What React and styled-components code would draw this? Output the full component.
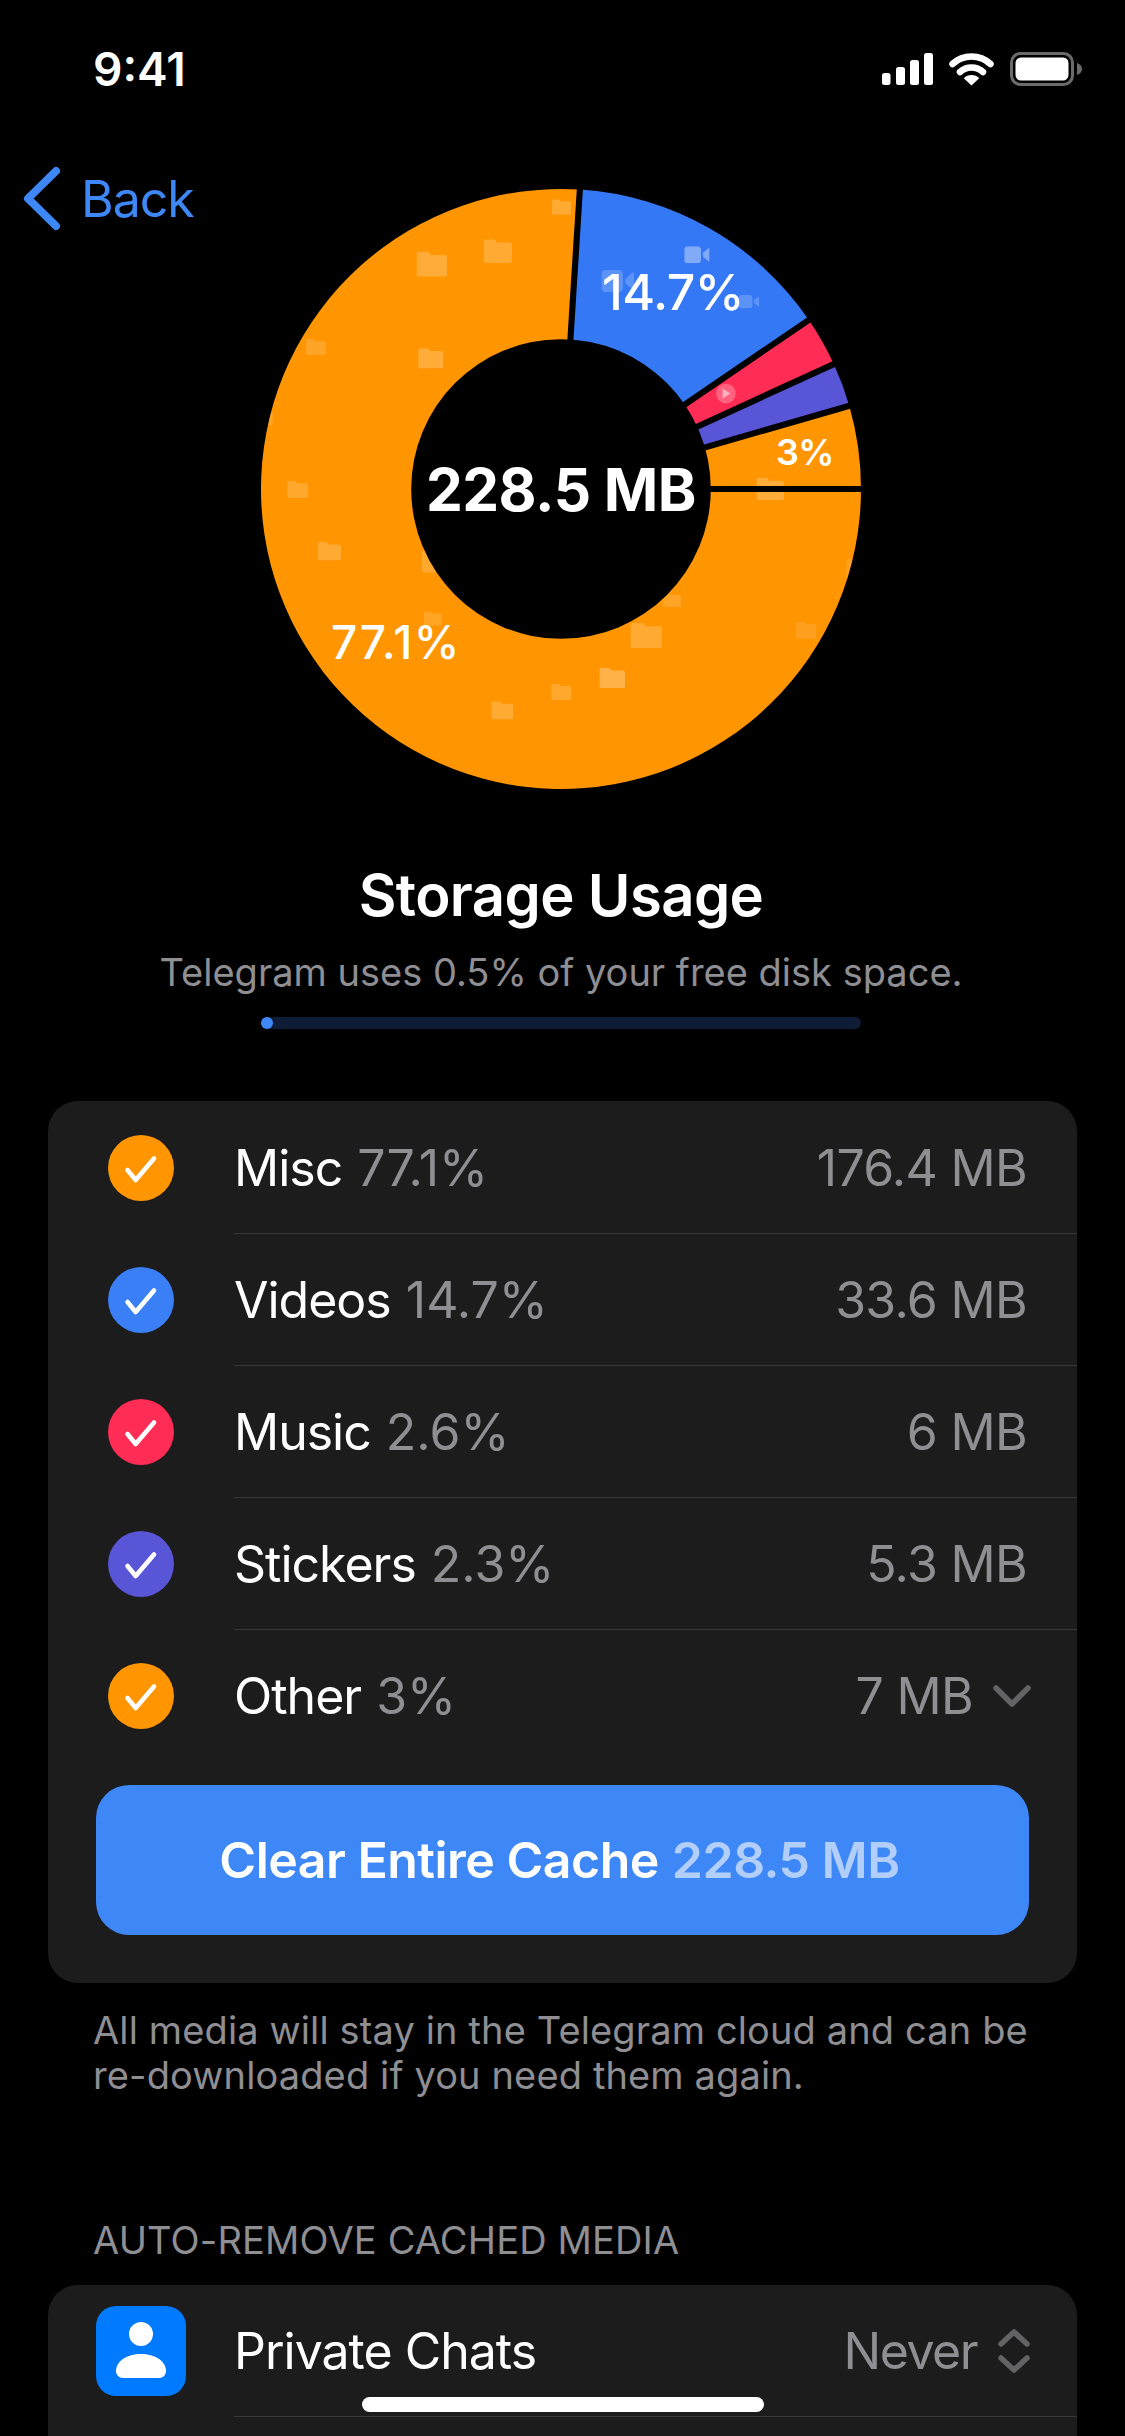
import styled, { createGlobalStyle } from "styled-components";

const GlobalStyle = createGlobalStyle`
    html, body {
        margin: 0;
        padding: 0;
        background: #000000;
    }
`

const CX = 786, CY = 780, OUTER = 735, INNER = 367;

const point = (r, deg) => {
    const a = (deg * Math.PI) / 180;
    return `${CX + r * Math.cos(a)} ${CY - r * Math.sin(a)}`;
};

const wedge = (from, to) =>
    `M${CX} ${CY} L${point(OUTER, from)} A${OUTER} ${OUTER} 0 ${to - from > 180 ? 1 : 0} 0 ${point(OUTER, to)} Z`;

const slices = [
    { from: 86.4, to: 360, color: "#FF9500" },
    { from: 34.3, to: 86.4, color: "#3478F6" },
    { from: 24.6, to: 34.3, color: "#FF2D55" },
    { from: 16.1, to: 24.6, color: "#5856D6" },
    { from: 0, to: 16.1, color: "#FF9500" },
];

const folders = [
    [763, 70, 48, 38, .2], [596, 168, 70, 58, .2], [432, 198, 75, 62, .22], [160, 412, 50, 40, .15],
    [436, 435, 62, 50, .22], [115, 760, 52, 42, .18], [190, 910, 58, 45, .2], [445, 930, 62, 55, .18],
    [450, 1080, 45, 35, .14], [1035, 1035, 45, 35, .14], [956, 1108, 78, 62, .2], [1362, 1105, 50, 42, .12],
    [880, 1218, 63, 50, .28], [762, 1257, 50, 40, .18], [615, 1300, 54, 45, .2], [1265, 752, 68, 55, .22],
    [1485, 950, 50, 50, .12], [30, 585, 50, 40, .14],
];

const videos = [[1088, 185, 62, 42, .38], [885, 243, 80, 55, .2], [1222, 305, 50, 32, .2]];

const legend = [
    { name: "Misc", share: "77.1%", size: "176.4 MB", color: "#FF9500" },
    { name: "Videos", share: "14.7%", size: "33.6 MB", color: "#3A7FF6" },
    { name: "Music", share: "2.6%", size: "6 MB", color: "#FF2D55" },
    { name: "Stickers", share: "2.3%", size: "5.3 MB", color: "#5856D6" },
    { name: "Other", share: "3%", size: "7 MB", color: "#FF9500", more: true },
];

function Folder({ x, y, w, h, o }) {
    return (
        <svg x={x} y={y} width={w} height={h} viewBox="0 0 100 80" preserveAspectRatio="none">
            <path d="M8 0h26c4 0 7 2 9 5l4 6h45c4 0 8 4 8 8v53c0 4-4 8-8 8H8c-4 0-8-4-8-8V8c0-4 4-8 8-8z" fill="#fff" fillOpacity={o} />
        </svg>
    );
}

function Video({ x, y, w, h, o }) {
    return (
        <svg x={x} y={y} width={w} height={h} viewBox="0 0 100 68" preserveAspectRatio="none">
            <rect width="66" height="68" rx="14" fill="#fff" fillOpacity={o} />
            <path d="M74 26 96 8c2-1 4 0 4 2v48c0 2-2 3-4 2L74 42z" fill="#fff" fillOpacity={o} />
        </svg>
    );
}

function Donut() {
    return (
        <svg width="640" height="640" viewBox="2 -4 1568 1568">
            <defs>
                <clipPath id="ring">
                    <circle cx={CX} cy={CY} r={OUTER} />
                </clipPath>
            </defs>
            {slices.map(s => <path key={s.from} d={wedge(s.from, s.to)} fill={s.color} />)}
            <g clipPath="url(#ring)">
                {folders.map(([x, y, w, h, o]) => <Folder key={`${x}-${y}`} x={x} y={y} w={w} h={h} o={o} />)}
                {videos.map(([x, y, w, h, o]) => <Video key={x} x={x} y={y} w={w} h={h} o={o} />)}
                <circle cx="1190" cy="546" r="24" fill="#fff" fillOpacity=".25" />
                <path d="M1182 534l19 12-19 12z" fill="#fff" fillOpacity=".5" />
            </g>
            {[0, 16.1, 24.6, 34.3, 86.4].map(deg => (
                <line key={deg} x1={CX} y1={CY} x2={CX + 760 * Math.cos(deg * Math.PI / 180)} y2={CY - 760 * Math.sin(deg * Math.PI / 180)} stroke="#000" strokeWidth="15" />
            ))}
            <circle cx={CX} cy={CY} r={INNER} fill="#000" />
        </svg>
    );
}

export default function App() {
    return (
        <Screen>
            <GlobalStyle />
            <StatusBar>
                <Time>9:41</Time>
                <StatusIcons>
                    <svg width="51" height="33" viewBox="0 0 51 33">
                        <rect x="0" y="20" width="8.5" height="12" rx="2.5" fill="#fff" />
                        <rect x="14" y="14" width="9" height="18" rx="2.5" fill="#fff" />
                        <rect x="28" y="7" width="9" height="25" rx="2.5" fill="#fff" />
                        <rect x="42" y="0" width="9" height="32" rx="2.5" fill="#fff" />
                    </svg>
                    <svg width="45" height="33" viewBox="0 0 45 33">
                        <path d="M3.5 11A28 28 0 0 1 41.5 11" fill="none" stroke="#fff" strokeWidth="6.5" strokeLinecap="round" />
                        <path d="M11 19A17 17 0 0 1 34 19" fill="none" stroke="#fff" strokeWidth="6.5" strokeLinecap="round" />
                        <path d="M22.5 32.5 14.8 25.2A11 11 0 0 1 30.2 25.2Z" fill="#fff" />
                    </svg>
                    <svg width="72" height="34" viewBox="0 0 72 34">
                        <rect x="1.5" y="1.5" width="61" height="31" rx="9" fill="none" stroke="#6b6b6b" strokeWidth="3" />
                        <rect x="5.5" y="5.5" width="53" height="23" rx="5.5" fill="#fff" />
                        <path d="M67 11c3 1 5 3 5 6s-2 5-5 6z" fill="#6b6b6b" />
                    </svg>
                </StatusIcons>
            </StatusBar>

            <BackLink>
                <svg width="38" height="63" viewBox="0 0 38 63">
                    <path d="M33 4 5 31.5 33 59" fill="none" stroke="#3E87F7" strokeWidth="8" strokeLinecap="round" strokeLinejoin="round" />
                </svg>
                <span>Back</span>
            </BackLink>

            <Hero>
                <Chart>
                    <Donut />
                    <ChartLabel $x={320} $y={320} $size={58.5} $weight={700}>228.5 MB</ChartLabel>
                    <ChartLabel $x={432} $y={123} $size={50} $weight={500}>14.7%</ChartLabel>
                    <ChartLabel $x={564} $y={283} $size={36} $weight={600}>3%</ChartLabel>
                    <ChartLabel $x={155} $y={473} $size={46} $weight={500} $spacing={1.5}>77.1%</ChartLabel>
                </Chart>
                <Title>Storage Usage</Title>
                <Subtitle>Telegram uses 0.5% of your free disk space.</Subtitle>
                <Track>
                    <TrackFill />
                </Track>
            </Hero>

            <Card>
                {legend.map((item, index) => (
                    <Row key={item.name}>
                        <Lead>
                            <CheckMark $color={item.color}>
                                <svg width="66" height="66" viewBox="0 0 66 66">
                                    <path d="M19.5 35 27.7 45 46 23.5" fill="none" stroke="#fff" strokeWidth="4.6" strokeLinecap="round" strokeLinejoin="round" />
                                </svg>
                            </CheckMark>
                        </Lead>
                        <RowBody $last={index === legend.length - 1}>
                            <Label>
                                {item.name} <Share>{item.share}</Share>
                            </Label>
                            <Value>
                                {item.size}
                                {item.more && (
                                    <MoreChevron width="38" height="24" viewBox="0 0 38 24">
                                        <path d="M3 4 19 20 35 4" fill="none" stroke="#636366" strokeWidth="5.5" strokeLinecap="round" strokeLinejoin="round" />
                                    </MoreChevron>
                                )}
                            </Value>
                        </RowBody>
                    </Row>
                ))}
                <ClearButton>
                    Clear Entire Cache <ClearSize>228.5 MB</ClearSize>
                </ClearButton>
            </Card>

            <Footnote>
                All media will stay in the Telegram cloud and can be<br />
                re-downloaded if you need them again.
            </Footnote>

            <SectionTitle>Auto-Remove Cached Media</SectionTitle>

            <SettingsCard>
                <Row>
                    <Lead>
                        <IconTile>
                            <svg width="90" height="90" viewBox="0 0 90 90">
                                <circle cx="45" cy="28" r="12" fill="#fff" />
                                <path d="M45 48c14 0 25 7 25 17 0 4-3 7-7 7H27c-4 0-7-3-7-7 0-10 11-17 25-17z" fill="#fff" />
                            </svg>
                        </IconTile>
                    </Lead>
                    <RowBody $tight>
                        <Label>Private Chats</Label>
                        <Value>
                            <Setting>Never</Setting>
                            <svg width="34" height="44" viewBox="0 0 34 44">
                                <path d="M4 15 17 3 30 15M4 29 17 41 30 29" fill="none" stroke="#636366" strokeWidth="5.5" strokeLinecap="round" strokeLinejoin="round" />
                            </svg>
                        </Value>
                    </RowBody>
                </Row>
            </SettingsCard>

            <HomeBar />
        </Screen>
    );
}

const Screen = styled.div`
    position: relative;
    width: 1125px;
    height: 2436px;
    overflow: hidden;
    background: #000000;
    color: #FFFFFF;
    font-family: "Inter", "Liberation Sans", sans-serif;
`
const StatusBar = styled.div`
    height: 132px;
    box-sizing: border-box;
    padding: 46px 43px 0 93px;
    display: flex;
    justify-content: space-between;
    align-items: flex-start;
`
const Time = styled.div`
    font-size: 46px;
    font-weight: 600;
    line-height: 46px;
`
const StatusIcons = styled.div`
    margin-top: 6px;
    display: flex;
    align-items: center;
    gap: 16px;
`
const BackLink = styled.div`
    position: absolute;
    top: 167px;
    left: 23px;
    display: flex;
    align-items: center;
    gap: 20px;
    color: #3E87F7;
    font-size: 50px;
    letter-spacing: -1px;
`
const Hero = styled.div`
    width: 1122px;
    display: flex;
    flex-direction: column;
    align-items: center;
`
const Chart = styled.div`
    position: relative;
    width: 640px;
    height: 640px;
    margin-top: 37px;

    svg {
        display: block;
    }
`
const ChartLabel = styled.span`
    position: absolute;
    left: ${props => props.$x}px;
    top: ${props => props.$y}px;
    transform: translate(-50%, -50%);
    font-size: ${props => props.$size}px;
    font-weight: ${props => props.$weight};
    letter-spacing: ${props => props.$spacing ?? -0.5}px;
    white-space: nowrap;
`
const Title = styled.div`
    margin-top: 50px;
    font-size: 58px;
    font-weight: 600;
    line-height: 72px;
    letter-spacing: -0.6px;
`
const Subtitle = styled.div`
    margin-top: 17px;
    font-size: 38px;
    line-height: 48px;
    color: #8E8E93;
`
const Track = styled.div`
    width: 600px;
    height: 12px;
    margin-top: 21px;
    border-radius: 6px;
    background: #0E1C36;
`
const TrackFill = styled.div`
    width: 12px;
    height: 12px;
    border-radius: 6px;
    background: #3E87F7;
`
const Card = styled.div`
    margin: 72px 48px 0;
    padding: 1px 0 48px;
    border-radius: 30px;
    background: #1C1C1C;
`
const Row = styled.div`
    height: 132px;
    display: flex;
`
const Lead = styled.div`
    flex: 0 0 186px;
    box-sizing: border-box;
    padding-left: 48px;
    display: flex;
    align-items: center;
`
const CheckMark = styled.div`
    width: 66px;
    height: 66px;
    margin-left: 12px;
    border-radius: 50%;
    background: ${props => props.$color};
`
const RowBody = styled.div`
    flex: 1;
    box-sizing: border-box;
    padding-right: ${props => props.$tight ? "46px" : "50px"};
    display: flex;
    justify-content: space-between;
    align-items: center;
    border-bottom: ${props => props.$last ? "none" : "1.5px solid #38383A"};
    font-size: 50px;
`
const Label = styled.div`
    letter-spacing: -1px;
`
const Share = styled.span`
    margin-left: 2px;
    color: #8E8E93;
    letter-spacing: 0;
`
const Value = styled.div`
    display: flex;
    align-items: center;
    gap: 20px;
    color: #8E8E93;
    letter-spacing: -0.7px;
`
const Setting = styled.span`
    letter-spacing: -1.5px;
`
const MoreChevron = styled.svg`
    margin-right: -4px;
`
const ClearButton = styled.div`
    height: 150px;
    box-sizing: border-box;
    margin: 23px 48px 0;
    padding-right: 6px;
    border-radius: 33px;
    display: flex;
    justify-content: center;
    align-items: center;
    gap: 13px;
    background: #3E87F7;
    font-size: 50px;
    font-weight: 600;
    letter-spacing: -0.5px;
`
const ClearSize = styled.span`
    color: #B2CFFB;
`
const Footnote = styled.div`
    margin: 25px 93px 0;
    font-size: 38px;
    line-height: 45px;
    letter-spacing: 0.13px;
    color: #8E8E93;
    white-space: nowrap;
`
const SectionTitle = styled.div`
    margin: 120px 93px 0;
    font-size: 38px;
    line-height: 45px;
    letter-spacing: 0.15px;
    color: #8E8E93;
    text-transform: uppercase;
`
const SettingsCard = styled.div`
    margin: 22px 48px 0;
    min-height: 300px;
    border-radius: 30px;
    background: #1C1C1C;
`
const IconTile = styled.div`
    width: 90px;
    height: 90px;
    border-radius: 20px;
    background: #007AFF;
`
const HomeBar = styled.div`
    position: absolute;
    left: 362px;
    bottom: 24px;
    width: 402px;
    height: 15px;
    border-radius: 8px;
    background: #FFFFFF;
`
